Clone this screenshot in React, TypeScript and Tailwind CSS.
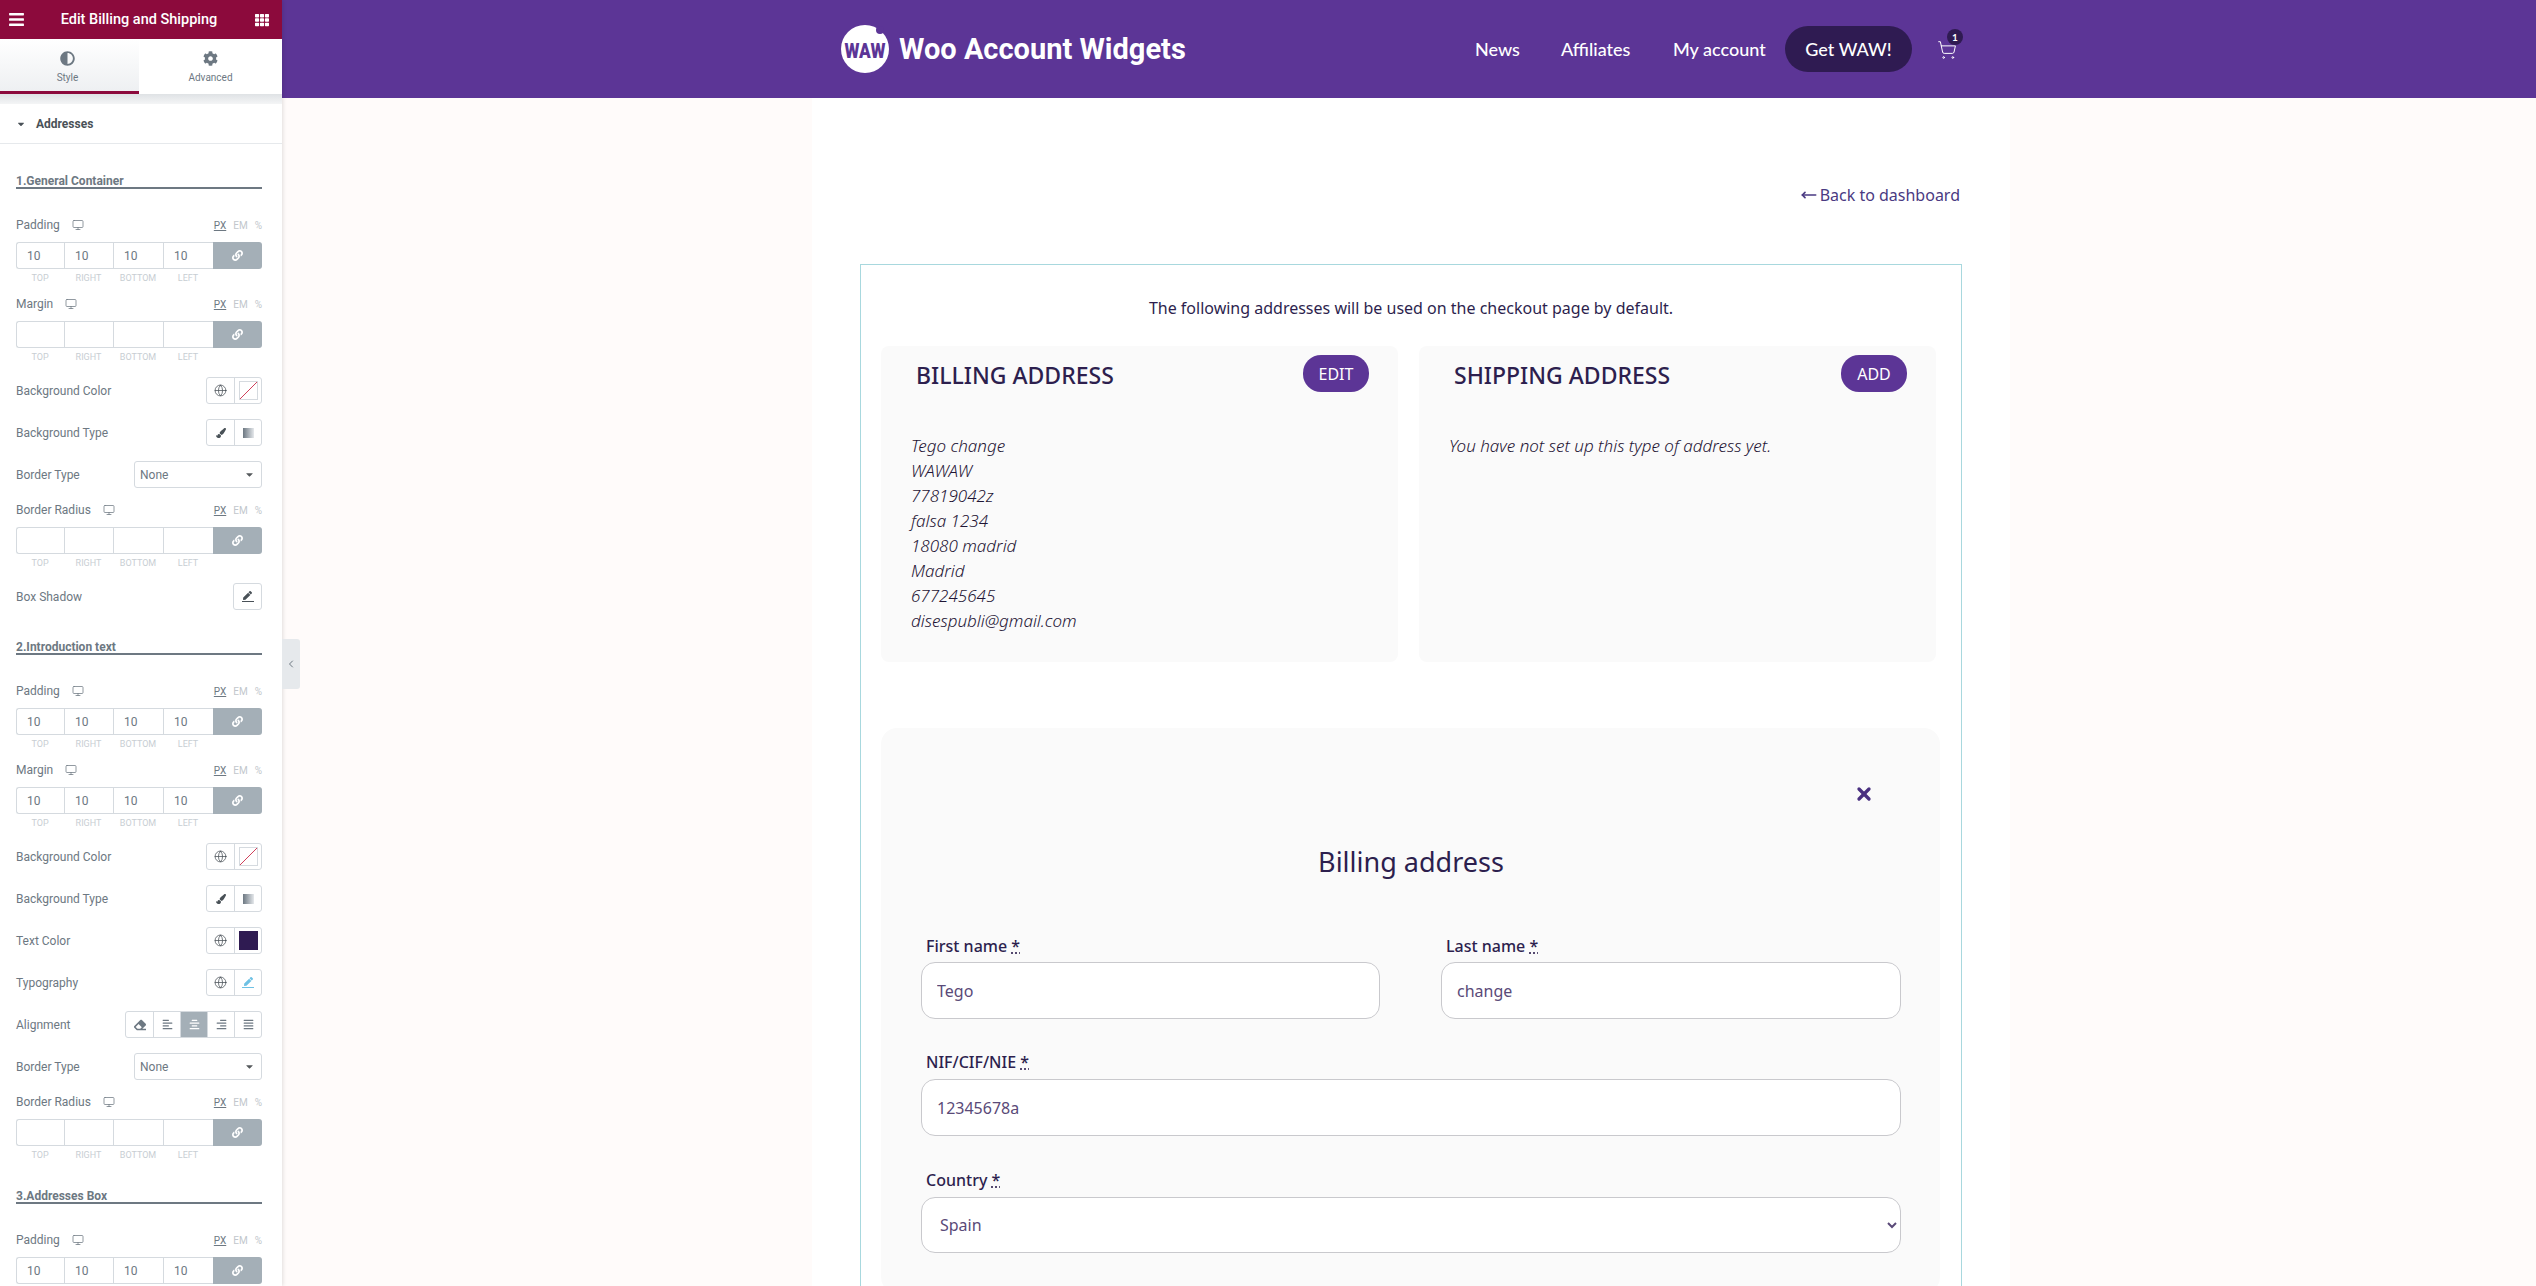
import { ChevronLeft, Globe, Monitor, MoveLeft, ShoppingCart, X } from "lucide-react";
import {
  FaAdjust,
  FaAlignCenter,
  FaAlignJustify,
  FaAlignLeft,
  FaAlignRight,
  FaBars,
  FaCaretDown,
  FaCog,
  FaEraser,
  FaLink,
  FaPaintBrush,
  FaPen,
  FaTh,
} from "react-icons/fa";
import type { ReactNode } from "react";

const CAPTIONS = ["Top", "Right", "Bottom", "Left"];
const TEN = ["10", "10", "10", "10"];
const ADDRESS = ["Tego change", "WAWAW", "77819042z", "falsa 1234", "18080 madrid", "Madrid", "677245645", "disespubli@gmail.com"];

function SectionTitle({ children, className = "" }: { children: ReactNode; className?: string }) {
  return (
    <div className={`border-b-2 border-[#6d7882] h-[17px] text-[12px] leading-[18px] font-bold text-[#6d7882] ${className}`}>
      {children}
    </div>
  );
}

function Dimensions({
  label,
  values,
  captions = true,
  className = "",
}: {
  label: string;
  values?: string[];
  captions?: boolean;
  className?: string;
}) {
  const widths = ["w-[48px]", "w-[49px]", "w-[50px]", "w-[50px]"];
  return (
    <div className={className}>
      <div className="flex h-[16px] items-center text-[12px] text-[#6d7882] mb-[9px]">
        <span>{label}</span>
        <Monitor size={12} strokeWidth={1.5} className="ml-[12px] text-[#6d7882]" />
        <div className="ml-auto flex items-center text-[10px] text-[#c2c7cc]">
          <span className="underline text-[#6d7882]">PX</span>
          <span className="ml-[7px]">EM</span>
          <span className="ml-[7px]">%</span>
        </div>
      </div>
      <div className="flex h-[27px]">
        {CAPTIONS.map((_, i) => (
          <div
            key={i}
            className={`${widths[i]} bg-white border-y border-l border-[#d5dadf] pl-[10px] flex items-center text-[12px] text-[#6d7882] ${i === 0 ? "rounded-l-[3px]" : ""}`}
          >
            {values ? values[i] : ""}
          </div>
        ))}
        <div className="w-[49px] rounded-r-[3px] bg-[#a4afb7] flex items-center justify-center text-white">
          <FaLink size={11} />
        </div>
      </div>
      {captions && (
        <div className="flex h-[14px] mt-[2px] text-[9px] leading-[14px] uppercase text-[#c8ced3]">
          {CAPTIONS.map((c, i) => (
            <span key={c} className={`${widths[i]} text-center`}>
              {c}
            </span>
          ))}
        </div>
      )}
    </div>
  );
}

function Segments({ items, active }: { items: ReactNode[]; active?: number }) {
  return (
    <div className="flex h-[27px] rounded-[3px] border border-[#d5dadf] overflow-hidden bg-white">
      {items.map((item, i) => (
        <div
          key={i}
          className={`w-[27px] flex items-center justify-center ${i > 0 ? "border-l border-[#d5dadf]" : ""} ${active === i ? "bg-[#a4afb7] text-white" : "text-[#6d7882]"}`}
        >
          {item}
        </div>
      ))}
    </div>
  );
}

function Row({ label, children, className = "" }: { label: string; children: ReactNode; className?: string }) {
  return (
    <div className={`flex h-[27px] items-center justify-between text-[12px] text-[#6d7882] ${className}`}>
      <span>{label}</span>
      {children}
    </div>
  );
}

function BorderType({ className = "" }: { className?: string }) {
  return (
    <Row label="Border Type" className={className}>
      <div className="w-[128px] h-[27px] rounded-[3px] border border-[#d5dadf] pl-[5px] pr-[6px] flex items-center justify-between bg-white">
        <span>None</span>
        <FaCaretDown size={11} className="text-[#55595c]" />
      </div>
    </Row>
  );
}

function PenIcon({ className }: { className: string }) {
  return (
    <span className={`flex flex-col items-center ${className}`}>
      <FaPen size={9} />
      <span className="mt-[1px] h-[1px] w-[12px] bg-current" />
    </span>
  );
}

const globe = <Globe size={13} strokeWidth={1.4} className="text-[#495157]" />;
const noColor = (
  <svg width="19" height="19" viewBox="0 0 19 19">
    <rect x="0.5" y="0.5" width="18" height="18" fill="#fff" stroke="#d5dadf" />
    <line x1="1" y1="18" x2="18" y2="1" stroke="#d0405a" strokeWidth="1" />
  </svg>
);
const brush = <FaPaintBrush size={10} className="text-[#495157]" />;
const gradient = <div className="w-[11px] h-[10px] bg-gradient-to-r from-[#6d7882] to-[#e6e9ec]" />;

function BackgroundRows() {
  return (
    <>
      <Row label="Background Color" className="mt-[13px]">
        <Segments items={[globe, noColor]} />
      </Row>
      <Row label="Background Type" className="mt-[15px]">
        <Segments items={[brush, gradient]} />
      </Row>
    </>
  );
}

function Sidebar() {
  return (
    <aside className="relative z-10 w-[282px] shrink-0 h-full bg-white shadow-[1px_0_4px_rgba(0,0,0,0.12)] font-['Roboto',sans-serif]">
      <div className="h-[39px] bg-[#8c0a3c] flex items-center justify-between pl-[8px] pr-[13px] text-white">
        <FaBars size={17} />
        <span className="text-[14.5px] font-medium mr-[2px]">Edit Billing and Shipping</span>
        <FaTh size={14} />
      </div>
      <div className="flex h-[55px]">
        <div className="w-[139px] border-b-[3px] border-[#8c0a3c] bg-gradient-to-b from-white to-[#eef0f2] flex flex-col items-center pt-[12px] pr-[4px] text-[#6d7882]">
          <FaAdjust size={15} />
          <span className="text-[10px] mt-[5px] leading-[14px]">Style</span>
        </div>
        <div className="flex-1 flex flex-col items-center pt-[12px] text-[#6d7882]">
          <FaCog size={15} />
          <span className="text-[10px] mt-[5px] leading-[14px]">Advanced</span>
        </div>
      </div>
      <div className="h-[10px] bg-gradient-to-b from-[#dfe2e5] to-[#f4f5f6]" />
      <div className="h-[40px] border-b border-[#e6e9ec] flex items-center pl-[16px] text-[12px] font-bold text-[#495157]">
        <FaCaretDown size={10} className="mr-[10px]" />
        <span>Addresses</span>
      </div>

      <div className="px-[16px] pr-[20px]">
        <SectionTitle className="mt-[28px]">1.General Container</SectionTitle>
        <Dimensions label="Padding" values={TEN} className="mt-[28px]" />
        <Dimensions label="Margin" className="mt-[11px]" />
        <BackgroundRows />
        <BorderType className="mt-[15px]" />
        <Dimensions label="Border Radius" className="mt-[14px]" />
        <Row label="Box Shadow" className="mt-[13px]">
          <Segments items={[<PenIcon className="text-[#495157]" />]} />
        </Row>

        <SectionTitle className="mt-[28px]">2.Introduction text</SectionTitle>
        <Dimensions label="Padding" values={TEN} className="mt-[28px]" />
        <Dimensions label="Margin" values={TEN} className="mt-[11px]" />
        <BackgroundRows />
        <Row label="Text Color" className="mt-[15px]">
          <Segments items={[globe, <div className="w-[19px] h-[19px] bg-[#2f1b52]" />]} />
        </Row>
        <Row label="Typography" className="mt-[15px]">
          <Segments items={[globe, <PenIcon className="text-[#6ec1e4]" />]} />
        </Row>
        <Row label="Alignment" className="mt-[15px]">
          <Segments
            active={2}
            items={[
              <FaEraser size={12} />,
              <FaAlignLeft size={11} />,
              <FaAlignCenter size={11} />,
              <FaAlignRight size={11} />,
              <FaAlignJustify size={11} />,
            ]}
          />
        </Row>
        <BorderType className="mt-[15px]" />
        <Dimensions label="Border Radius" className="mt-[14px]" />

        <SectionTitle className="mt-[25px]">3.Addresses Box</SectionTitle>
        <Dimensions label="Padding" values={TEN} captions={false} className="mt-[28px]" />
      </div>
    </aside>
  );
}

function Logo() {
  return (
    <svg width="48" height="48" viewBox="0 0 48 48" className="overflow-visible">
      <circle cx="24" cy="24" r="24" fill="#fff" />
      <circle cx="39" cy="5" r="4" fill="#5c3596" />
      <text
        x="24"
        y="33"
        textAnchor="middle"
        fontFamily="Roboto, sans-serif"
        fontWeight="900"
        fontSize="21"
        textLength="41"
        lengthAdjust="spacingAndGlyphs"
        fill="#5c3596"
      >
        WAW
      </text>
    </svg>
  );
}

function Header() {
  return (
    <header className="h-[98px] bg-[#5c3596] flex items-center pl-[559px] text-white">
      <Logo />
      <span className="ml-[10px] w-[286px] whitespace-nowrap font-['Roboto',sans-serif] font-bold text-[29px] leading-none">
        Woo Account Widgets
      </span>
      <nav className="ml-[290px] flex items-center font-['Lato',sans-serif] text-[18px] font-medium">
        <a className="w-[86px]">News</a>
        <a className="w-[112px]">Affiliates</a>
        <a className="w-[112px]">My account</a>
        <a className="w-[127px] h-[46px] rounded-[23px] bg-[#2f1b52] flex items-center justify-center">Get WAW!</a>
        <div className="relative ml-[25px] mt-[2px]">
          <ShoppingCart size={20} strokeWidth={1.2} />
          <span className="absolute -top-[11px] -right-[6px] w-[16px] h-[16px] rounded-full bg-[#2f1b52] text-[10px] font-bold flex items-center justify-center">
            1
          </span>
        </div>
      </nav>
    </header>
  );
}

function AddressCard({ title, action, children }: { title: string; action: string; children: ReactNode }) {
  return (
    <div className="w-[517px] h-[316px] bg-[#fafafa] rounded-[8px]">
      <div className="flex justify-between items-start pl-[35px] pr-[29px] pt-[9px] h-[87px]">
        <h3 className="text-[23px] leading-[40px] font-medium text-[#2d1f4e]">{title}</h3>
        <span className="h-[37px] w-[66px] rounded-[18px] bg-[#5c3596] text-white text-[16px] flex items-center justify-center">
          {action}
        </span>
      </div>
      <div className="pl-[30px] italic font-light text-[17px] leading-[25px] text-[#1f1535]">{children}</div>
    </div>
  );
}

function FieldLabel({ label, className }: { label: string; className: string }) {
  return (
    <label className={`block pl-[5px] h-[22px] text-[16px] leading-[22px] font-medium text-[#2d1f4e] ${className}`}>
      {label} <abbr className="underline decoration-dotted">*</abbr>
    </label>
  );
}

function Field({ label, value, className = "", labelClass = "mb-[5px]" }: { label: string; value: string; className?: string; labelClass?: string }) {
  return (
    <div className={className}>
      <FieldLabel label={label} className={labelClass} />
      <input
        readOnly
        defaultValue={value}
        className="w-full h-[57px] rounded-[14px] border border-[#c9c9cd] bg-white px-[15px] text-[16px] text-[#5a4a78] outline-none"
      />
    </div>
  );
}

function Content() {
  return (
    <div className="ml-[530px] w-[1198px] h-[1188px] bg-white px-[48px] overflow-hidden font-['Noto_Sans',sans-serif]">
      <div className="h-[166px] pt-[85px] pr-[2px] flex justify-end items-start">
        <a className="flex items-center text-[#4a3a82] text-[16px] leading-[24px]">
          <MoveLeft size={16} strokeWidth={2.5} className="mr-[3px]" />
          Back to dashboard
        </a>
      </div>
      <div className="w-[1102px] h-[1100px] border border-[#a8d8de] px-[20px]">
        <p className="pt-[31px] h-[81px] text-center text-[16px] leading-[24px] text-[#2d1f4e]">
          The following addresses will be used on the checkout page by default.
        </p>
        <div className="flex gap-[21px]">
          <AddressCard title="BILLING ADDRESS" action="EDIT">
            {ADDRESS.map((line) => (
              <div key={line}>{line}</div>
            ))}
          </AddressCard>
          <AddressCard title="SHIPPING ADDRESS" action="ADD">
            You have not set up this type of address yet.
          </AddressCard>
        </div>
        <div className="w-[1059px] mt-[66px] bg-[#fafafa] rounded-[16px] pt-[54px] pl-[40px] pr-[39px] pb-[40px]">
          <div className="h-[24px] flex justify-end items-center pr-[27px]">
            <X size={20} strokeWidth={4} className="text-[#4a3080]" />
          </div>
          <h3 className="mt-[34px] h-[44px] text-center text-[27px] leading-[44px] text-[#2d1f4e]">Billing address</h3>
          <div className="mt-[51px] flex gap-[61px]">
            <Field label="First name" value="Tego" className="w-[459px]" />
            <Field label="Last name" value="change" className="w-[460px]" />
          </div>
          <Field label="NIF/CIF/NIE" value="12345678a" className="mt-[32px]" labelClass="mb-[6px]" />
          <div className="mt-[33px]">
            <FieldLabel label="Country" className="mb-[6px]" />
            <select
              defaultValue="Spain"
              className="w-full h-[56px] rounded-[14px] border border-[#c9c9cd] bg-white px-[14px] text-[16px] text-[#5a4a78] outline-none"
            >
              <option>Spain</option>
            </select>
          </div>
        </div>
      </div>
    </div>
  );
}

export default function App() {
  return (
    <div className="relative flex h-[1286px] overflow-hidden bg-[#fffbfa]">
      <Sidebar />
      <main className="flex-1 min-w-0">
        <Header />
        <Content />
      </main>
      <div className="absolute left-[282px] top-[639px] w-[18px] h-[50px] bg-[#e6e9ec] rounded-r-[3px] flex items-center justify-center text-[#6d7882] z-20">
        <ChevronLeft size={12} />
      </div>
    </div>
  );
}
